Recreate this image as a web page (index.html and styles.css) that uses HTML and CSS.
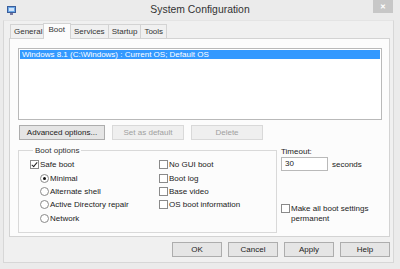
FILE: index.html
```html
<!DOCTYPE html>
<html lang="en">
<head>
  <meta charset="UTF-8">
  <title>System Configuration</title>
  <link rel="stylesheet" href="styles.css">
</head>
<body>
  <div id="window">
    <div class="titlebar">
      <div class="app-icon">
        <svg width="9" height="9" viewBox="0 0 9 9">
          <rect x="0.5" y="0.5" width="8" height="6" fill="#6aa7e6" stroke="#3b5d9a"/>
          <rect x="2" y="2" width="5" height="3" fill="#cfe3fa"/>
          <rect x="3" y="7" width="3" height="2" fill="#7a7aa0"/>
        </svg>
      </div>
      <div class="title">System Configuration</div>
      <div class="close">&#x2715;</div>
    </div>

    <div class="client">
      <div class="tabs">
        <div class="tab">General</div>
        <div class="tab active">Boot</div>
        <div class="tab">Services</div>
        <div class="tab">Startup</div>
        <div class="tab">Tools</div>
      </div>

      <div class="panel">
        <div class="listbox">
          <div class="list-item selected">Windows 8.1 (C:\Windows) : Current OS; Default OS</div>
        </div>

        <div class="button-row">
          <div class="button wide">Advanced options...</div>
          <div class="button disabled">Set as default</div>
          <div class="button disabled">Delete</div>
        </div>

        <div class="lower">
          <fieldset class="boot-options">
            <legend>Boot options</legend>
            <div class="opt-grid">
              <div class="opt"><span class="check checked"></span>Safe boot</div>
              <div class="opt"><span class="check"></span>No GUI boot</div>
              <div class="opt sub"><span class="radio on"></span>Minimal</div>
              <div class="opt"><span class="check"></span>Boot log</div>
              <div class="opt sub"><span class="radio"></span>Alternate shell</div>
              <div class="opt"><span class="check"></span>Base video</div>
              <div class="opt sub"><span class="radio"></span>Active Directory repair</div>
              <div class="opt"><span class="check"></span>OS boot information</div>
              <div class="opt sub"><span class="radio"></span>Network</div>
            </div>
          </fieldset>

          <div class="side">
            <div class="label">Timeout:</div>
            <div class="timeout-row">
              <div class="textbox">30</div>
              <span>seconds</span>
            </div>
            <div class="permanent">
              <span class="check"></span>
              <span>Make all boot settings<br>permanent</span>
            </div>
          </div>
        </div>
      </div>

      <div class="dialog-buttons">
        <div class="button">OK</div>
        <div class="button">Cancel</div>
        <div class="button">Apply</div>
        <div class="button">Help</div>
      </div>
    </div>
  </div>
</body>
</html>
```

FILE: styles.css
```css
body {
  margin: 0;
  width: 400px;
  height: 269px;
  overflow: hidden;
  background-color: #ebebeb;
  color: #222;
  font-family: "Liberation Sans", Arial, sans-serif;
  font-size: 8px;
}

#window {
  display: flex;
  flex-direction: column;
  height: 269px;
}

.titlebar {
  display: grid;
  grid-template-columns: 1fr auto 1fr;
  align-items: start;
  height: 20px;
}

.app-icon {
  padding: 6px 0 0 7px;
  line-height: 0;
}

.title {
  padding-top: 4px;
  font-size: 10.4px;
  color: #333;
}

.close {
  justify-self: end;
  margin-right: 7px;
  width: 20px;
  height: 13px;
  background-color: #c7c7c7;
  color: #fff;
  font-size: 7px;
  font-weight: bold;
  text-align: center;
  line-height: 13px;
}

.client {
  margin: 0 6px 0 3px;
  height: 243px;
  background-color: #f0f0f0;
  border: 1px solid #d7d7d7;
  border-top-color: #e4e4e4;
  box-sizing: border-box;
}

.tabs {
  display: flex;
  align-items: flex-end;
  height: 17px;
  padding-left: 6px;
}

.tab {
  height: 13px;
  padding: 0 3px;
  margin-right: -1px;
  border: 1px solid #d3d3d3;
  border-bottom: none;
  background-color: #f0f0f0;
  line-height: 13px;
  color: #333;
}

.tab.active {
  position: relative;
  height: 15px;
  padding: 0 5px 0 4px;
  margin: 0 0 -1px -2px;
  background-color: #fcfcfc;
  line-height: 12px;
  z-index: 1;
}

.tab.active + .tab {
  margin-left: -1px;
}

.panel {
  margin: 0 3px 0 5px;
  height: 199px;
  padding: 9px 7px 0 8px;
  box-sizing: border-box;
  border: 1px solid #d3d3d3;
  background-color: #fcfcfc;
}

.listbox {
  height: 72px;
  box-sizing: border-box;
  border: 1px solid #b9b9b9;
  background-color: #fff;
  padding: 1px;
}

.list-item {
  height: 9px;
  line-height: 9px;
  padding-left: 2px;
}

.list-item.selected {
  background-color: #3399ff;
  color: #fff;
}

.button-row {
  display: flex;
  gap: 7px;
  margin-top: 5px;
  padding-left: 1px;
}

.button {
  width: 50px;
  height: 15px;
  box-sizing: border-box;
  border: 1px solid #adadad;
  background-color: #e5e5e5;
  text-align: center;
  line-height: 13px;
  color: #222;
}

.button-row .button {
  width: 72px;
}

.button-row .button.wide {
  width: 86px;
}

.button.disabled {
  border-color: #d9d9d9;
  background-color: #efefef;
  color: #a0a0a0;
}

.lower {
  display: flex;
  margin-top: 6px;
}

.boot-options {
  width: 259px;
  height: 87px;
  box-sizing: border-box;
  margin: 0;
  padding: 3px 0 0 11px;
  border: 1px solid #d9d9d9;
}

.boot-options legend {
  padding: 0 2px;
  margin-left: 3px;
  color: #333;
}

.opt-grid {
  display: grid;
  grid-template-columns: 129px auto;
  grid-auto-rows: 13.4px;
  align-items: center;
}

.opt {
  display: flex;
  align-items: center;
  white-space: nowrap;
}

.opt.sub {
  padding-left: 10px;
}

.check {
  display: inline-block;
  width: 9px;
  height: 9px;
  box-sizing: border-box;
  border: 1px solid #8a8a8a;
  background-color: #fff;
  margin-right: 1px;
  position: relative;
}

.check.checked::after {
  content: "";
  position: absolute;
  left: 2px;
  top: 0px;
  width: 2px;
  height: 5px;
  border: solid #222;
  border-width: 0 1.5px 1.5px 0;
  transform: rotate(40deg);
}

.radio {
  display: inline-block;
  width: 9px;
  height: 9px;
  box-sizing: border-box;
  border: 1px solid #8a8a8a;
  border-radius: 50%;
  background-color: #fff;
  margin-right: 1px;
  position: relative;
}

.radio.on::after {
  content: "";
  position: absolute;
  left: 2px;
  top: 2px;
  width: 3px;
  height: 3px;
  border-radius: 50%;
  background-color: #111;
}

.side {
  display: flex;
  flex-direction: column;
  padding: 1px 0 0 4px;
}

.label {
  height: 9px;
  line-height: 9px;
}

.timeout-row {
  display: flex;
  align-items: center;
  gap: 4px;
  margin-top: 1px;
}

.textbox {
  width: 47px;
  height: 14px;
  box-sizing: border-box;
  border: 1px solid #b9b9b9;
  background-color: #fff;
  padding-left: 3px;
  line-height: 12px;
}

.permanent {
  display: flex;
  align-items: flex-start;
  margin-top: 33px;
  line-height: 9.5px;
}

.permanent .check {
  margin-top: 0;
}

.dialog-buttons {
  display: flex;
  justify-content: flex-end;
  gap: 6px;
  margin-top: 5px;
  padding-right: 3px;
}
```
